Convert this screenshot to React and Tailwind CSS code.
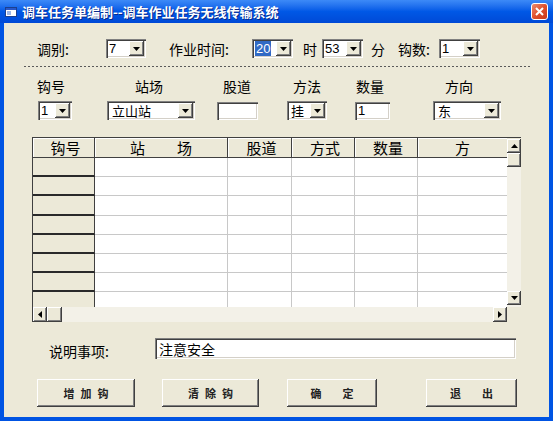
import React from "react";

const cjk = { fontFamily: '"Noto Sans CJK SC", "Noto Sans", sans-serif' };
const latin = { fontFamily: '"Liberation Sans", "Noto Sans CJK SC", sans-serif' };

const Arrow = ({ dir }) => {
  const paths = {
    down: "M0 0h7L3.5 4z",
    up: "M0 4h7L3.5 0z",
    left: "M4 0v7L0 3.5z",
    right: "M0 0v7L4 3.5z",
  };
  const vertical = dir === "up" || dir === "down";
  return (
    <svg width={vertical ? 7 : 4} height={vertical ? 4 : 7} viewBox={vertical ? "0 0 7 4" : "0 0 4 7"}>
      <path d={paths[dir]} fill="#000" />
    </svg>
  );
};

const raised =
  "bg-[#ece9d8] shadow-[inset_-1px_-1px_0_#404040,inset_1px_1px_0_#ffffff,inset_-2px_-2px_0_#808080]";
const sunken =
  "bg-white shadow-[inset_1px_1px_0_#808080,inset_2px_2px_0_#404040,inset_-1px_-1px_0_#ffffff,inset_-2px_-2px_0_#d4d0c8]";

const Combo = ({ width, children }) => (
  <div className={`${width} ${sunken} h-[19px] flex items-stretch p-[2px]`}>
    <div className="flex-1 flex items-center pl-[1px] text-[13px] leading-[15px] text-black whitespace-nowrap">
      {children}
    </div>
    <div className={`${raised} w-[15px] shrink-0 flex items-center justify-center`}>
      <Arrow dir="down" />
    </div>
  </div>
);

const TextBox = ({ width, children }) => (
  <div className={`${width} ${sunken} h-[18px] flex items-center pl-[3px] text-[13px] leading-[15px]`}>
    {children}
  </div>
);

const ScrollBtn = ({ dir, className }) => (
  <div className={`${raised} ${className} flex items-center justify-center shrink-0`}>
    <Arrow dir={dir} />
  </div>
);

const rowHeights = ["h-[19px]", "h-[19px]", "h-[20px]", "h-[19px]", "h-[19px]", "h-[19px]", "h-[19px]", "h-[19px]"];

const Button = ({ width, chars, gap }) => (
  <div className={`${width} ${raised} h-[28px] flex items-center justify-center ${gap} text-[11px] font-bold text-[#222]`}>
    {chars.map((c) => (
      <span key={c}>{c}</span>
    ))}
  </div>
);

export default function App() {
  return (
    <div className="w-[553px] h-[421px] flex flex-col bg-[#0054e3] overflow-hidden" style={cjk}>
      {/* title bar */}
      <div className="h-[23px] shrink-0 flex items-center bg-gradient-to-b from-[#3d8af7] via-[#0058e6] to-[#0049d6]">
        <svg className="ml-[5px]" width="12" height="12" viewBox="0 0 12 12">
          <rect x="0.5" y="1.5" width="11" height="9" fill="#fff" stroke="#1b3f8f" />
          <rect x="1" y="2" width="10" height="2" fill="#2a58c8" />
          <rect x="2" y="5" width="4" height="4" fill="#9db7e8" />
        </svg>
        <span className="ml-[5px] text-white font-bold text-[13px] leading-none [text-shadow:1px_1px_0_#0a2a8a]">
          调车任务单编制--调车作业任务无线传输系统
        </span>
        <div className="ml-auto mr-[5px] w-[17px] h-[17px] rounded-[3px] border border-white bg-gradient-to-br from-[#e98a6f] via-[#e0502c] to-[#c8391a] flex items-center justify-center">
          <svg width="9" height="9" viewBox="0 0 9 9">
            <path d="M1 1l7 7M8 1L1 8" stroke="#fff" strokeWidth="2" />
          </svg>
        </div>
      </div>

      {/* client area */}
      <div className="flex-1 mx-[4px] mb-[4px] bg-[#ece9d8] flex flex-col text-black">
        {/* row 1 */}
        <div className="mt-[16px] h-[19px] flex items-center pl-[33px] text-[14px] leading-none">
          <span className="w-[69px]">调别:</span>
          <Combo width="w-[40px]"><span style={latin}>7</span></Combo>
          <span className="w-[23px]" />
          <span className="w-[83px]">作业时间:</span>
          <Combo width="w-[41px]">
            <span style={latin} className="bg-[#316ac5] text-white px-[1px]">20</span>
          </Combo>
          <span className="w-[29px] pl-[10px]">时</span>
          <Combo width="w-[41px]"><span style={latin}>53</span></Combo>
          <span className="w-[35px] pl-[8px]">分</span>
          <span className="w-[41px]">钩数:</span>
          <Combo width="w-[41px]"><span style={latin}>1</span></Combo>
        </div>

        {/* dashed separator */}
        <div className="mt-[8px] ml-[20px] w-[508px] h-px bg-[repeating-linear-gradient(90deg,#5a5a5a_0_2px,transparent_2px_4px)]" />

        {/* row 2 labels */}
        <div className="mt-[11px] h-[16px] flex items-center pl-[33px] text-[14px] leading-none">
          <span className="w-[98px]">钩号</span>
          <span className="w-[88px]">站场</span>
          <span className="w-[70px]">股道</span>
          <span className="w-[63px]">方法</span>
          <span className="w-[89px]">数量</span>
          <span>方向</span>
        </div>

        {/* row 2 inputs */}
        <div className="mt-[7px] flex items-center pl-[34px]">
          <Combo width="w-[34px]"><span style={latin}>1</span></Combo>
          <div className="ml-[35px]">
            <Combo width="w-[88px]"><span className="pl-[2px]">立山站</span></Combo>
          </div>
          <div className="ml-[22px]"><TextBox width="w-[41px]" /></div>
          <div className="ml-[29px]">
            <Combo width="w-[40px]"><span className="pl-[1px]">挂</span></Combo>
          </div>
          <div className="ml-[28px]">
            <TextBox width="w-[35px]"><span style={latin}>1</span></TextBox>
          </div>
          <div className="ml-[43px]">
            <Combo width="w-[68px]"><span className="pl-[2px]">东</span></Combo>
          </div>
        </div>

        {/* grid */}
        <div className="mt-[17px] ml-[28px] w-[489px] h-[185px] border-l border-t border-[#404040] flex flex-col">
          <div className="h-[169px] flex">
            <div className="w-[474px] overflow-hidden">
              <div className="h-[20px] flex bg-[#ece9d8] border-b border-[#404040] text-[15px] leading-none">
                <div className="w-[62px] border-r border-[#404040] flex items-center justify-center pl-[4px] shadow-[inset_1px_1px_0_#fff]">钩号</div>
                <div className="w-[133px] border-r border-[#404040] flex items-center justify-center gap-[32px] shadow-[inset_1px_1px_0_#fff]">
                  <span>站</span>
                  <span>场</span>
                </div>
                <div className="w-[64px] border-r border-[#404040] flex items-center justify-center pl-[4px] shadow-[inset_1px_1px_0_#fff]">股道</div>
                <div className="w-[63px] border-r border-[#404040] flex items-center justify-center pl-[4px] shadow-[inset_1px_1px_0_#fff]">方式</div>
                <div className="w-[63px] border-r border-[#404040] flex items-center justify-center pl-[4px] shadow-[inset_1px_1px_0_#fff]">数量</div>
                <div className="w-[89px] flex items-center pl-[37px] shadow-[inset_1px_1px_0_#fff]">方</div>
              </div>
              {rowHeights.map((h, i) => (
                <div key={i} className={`${h} flex`}>
                  <div className="w-[62px] bg-[#ece9d8] border-r border-b-2 border-r-[#404040] border-b-[#2a2a2a]" />
                  <div className="w-[133px] bg-white border-r border-b border-[#c8c8c8]" />
                  <div className="w-[64px] bg-white border-r border-b border-[#c8c8c8]" />
                  <div className="w-[63px] bg-white border-r border-b border-[#c8c8c8]" />
                  <div className="w-[63px] bg-white border-r border-b border-[#c8c8c8]" />
                  <div className="w-[89px] bg-white border-b border-[#c8c8c8]" />
                </div>
              ))}
            </div>
            {/* vertical scrollbar */}
            <div className="w-[14px] flex flex-col bg-[#f3f1e8]">
              <div className="h-[1px] bg-[#ece9d8]" />
              <ScrollBtn dir="up" className="h-[14px]" />
              <div className={`${raised} h-[14px]`} />
              <div className="flex-1" />
              <ScrollBtn dir="down" className="h-[14px]" />
              <div className="h-[2px]" />
            </div>
          </div>
          {/* horizontal scrollbar */}
          <div className="h-[15px] flex">
            <div className="w-[474px] flex bg-[#f3f1e8]">
              <ScrollBtn dir="left" className="w-[14px]" />
              <div className={`${raised} w-[15px]`} />
              <div className="flex-1" />
              <ScrollBtn dir="right" className="w-[14px]" />
            </div>
            <div className="w-[14px] bg-[#ece9d8]" />
          </div>
        </div>

        {/* notes */}
        <div className="mt-[16px] h-[21px] flex items-center pl-[45px] text-[14px] leading-none">
          <span className="w-[106px] pt-[4px]">说明事项:</span>
          <div className={`w-[361px] h-[21px] ${sunken} flex items-center pl-[4px]`}>注意安全</div>
        </div>

        {/* buttons */}
        <div className="mt-[20px] flex items-center pl-[33px]">
          <Button width="w-[98px]" chars={["增", "加", "钩"]} gap="gap-[6px]" />
          <div className="ml-[27px]">
            <Button width="w-[97px]" chars={["清", "除", "钩"]} gap="gap-[6px]" />
          </div>
          <div className="ml-[28px]">
            <Button width="w-[90px]" chars={["确", "定"]} gap="gap-[21px]" />
          </div>
          <div className="ml-[49px]">
            <Button width="w-[91px]" chars={["退", "出"]} gap="gap-[21px]" />
          </div>
        </div>
      </div>
    </div>
  );
}
